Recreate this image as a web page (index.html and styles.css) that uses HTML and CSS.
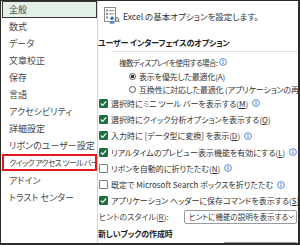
FILE: index.html
```html
<!DOCTYPE html>
<html lang="ja">
<head>
  <meta charset="UTF-8" />
  <title>Excel のオプション</title>
  <link rel="stylesheet" href="styles.css">
</head>
<body>

  <div class="dialog">
    <nav class="side">
      <div class="item selected">全般</div>
      <div class="item">数式</div>
      <div class="item">データ</div>
      <div class="item">文章校正</div>
      <div class="item">保存</div>
      <div class="item">言語</div>
      <div class="item">アクセシビリティ</div>
      <div class="item">詳細設定</div>
      <div class="item">リボンのユーザー設定</div>
      <div class="item marked">クイック アクセス ツール バー</div>
      <div class="item gap">アドイン</div>
      <div class="item">トラスト センター</div>
    </nav>

    <main class="pane">
      <div class="head">
        <svg class="head-icon" width="16" height="17" viewBox="0 0 16 17">
          <rect x="0.5" y="0.5" width="11" height="14" fill="#fff" stroke="#8a8a8a"/>
          <rect x="2" y="2.5" width="2" height="2" fill="#8a8a8a"/>
          <rect x="5" y="3" width="5" height="1" fill="#8a8a8a"/>
          <rect x="2" y="6" width="2" height="2" fill="#8a8a8a"/>
          <rect x="5" y="6.5" width="5" height="1" fill="#8a8a8a"/>
          <rect x="2" y="9.5" width="2" height="2" fill="#8a8a8a"/>
          <circle cx="8" cy="11.3" r="1.8" fill="#2f74c8"/>
          <path d="M5 16.5 Q8 12.3 11 16.5 Z" fill="#2f74c8"/>
          <circle cx="13" cy="12.5" r="1.7" fill="none" stroke="#555" stroke-width="0.9"/>
          <line x1="14.2" y1="13.7" x2="15.6" y2="15.1" stroke="#555" stroke-width="1"/>
        </svg>
        <span>Excel の基本オプションを設定します。</span>
      </div>

      <div class="heading">ユーザー インターフェイスのオプション</div>
      <div class="rule"></div>

      <div class="sub"><span>複数ディスプレイを使用する場合:</span><svg class="info" viewBox="0 0 8 8"><circle cx="4" cy="4" r="3.4" fill="none" stroke="#2b6fd6" stroke-width="0.8"/><circle cx="4" cy="2.4" r="0.55" fill="#2b6fd6"/><rect x="3.55" y="3.4" width="0.9" height="2.6" fill="#2b6fd6"/></svg></div>
      <div class="radio-row"><span class="radio on"></span><span>表示を優先した最適化(A)</span></div>
      <div class="radio-row second"><span class="radio"></span><span>互換性に対応した最適化 (アプリケーションの再起動が必要)</span></div>

      <div class="row"><span class="check on"></span><span>選択時にミニ ツール バーを表示する(<u>M</u>)</span><svg class="info" viewBox="0 0 8 8"><circle cx="4" cy="4" r="3.4" fill="none" stroke="#2b6fd6" stroke-width="0.8"/><circle cx="4" cy="2.4" r="0.55" fill="#2b6fd6"/><rect x="3.55" y="3.4" width="0.9" height="2.6" fill="#2b6fd6"/></svg></div>
      <div class="row"><span class="check on"></span><span>選択時にクイック分析オプションを表示する(<u>Q</u>)</span></div>
      <div class="row"><span class="check on"></span><span>入力時に [データ型に変換] を表示(<u>D</u>)</span><svg class="info" viewBox="0 0 8 8"><circle cx="4" cy="4" r="3.4" fill="none" stroke="#2b6fd6" stroke-width="0.8"/><circle cx="4" cy="2.4" r="0.55" fill="#2b6fd6"/><rect x="3.55" y="3.4" width="0.9" height="2.6" fill="#2b6fd6"/></svg></div>
      <div class="row"><span class="check on"></span><span>リアルタイムのプレビュー表示機能を有効にする(<u>L</u>)</span><svg class="info" viewBox="0 0 8 8"><circle cx="4" cy="4" r="3.4" fill="none" stroke="#2b6fd6" stroke-width="0.8"/><circle cx="4" cy="2.4" r="0.55" fill="#2b6fd6"/><rect x="3.55" y="3.4" width="0.9" height="2.6" fill="#2b6fd6"/></svg></div>
      <div class="row"><span class="check"></span><span>リボンを自動的に折りたたむ(<u>N</u>)</span><svg class="info" viewBox="0 0 8 8"><circle cx="4" cy="4" r="3.4" fill="none" stroke="#2b6fd6" stroke-width="0.8"/><circle cx="4" cy="2.4" r="0.55" fill="#2b6fd6"/><rect x="3.55" y="3.4" width="0.9" height="2.6" fill="#2b6fd6"/></svg></div>
      <div class="row"><span class="check"></span><span>既定で Microsoft Search ボックスを折りたたむ</span><svg class="info" viewBox="0 0 8 8"><circle cx="4" cy="4" r="3.4" fill="none" stroke="#2b6fd6" stroke-width="0.8"/><circle cx="4" cy="2.4" r="0.55" fill="#2b6fd6"/><rect x="3.55" y="3.4" width="0.9" height="2.6" fill="#2b6fd6"/></svg></div>
      <div class="row"><span class="check on"></span><span>アプリケーション ヘッダーに保存コマンドを表示する(<u>S</u>)</span><svg class="info" viewBox="0 0 8 8"><circle cx="4" cy="4" r="3.4" fill="none" stroke="#2b6fd6" stroke-width="0.8"/><circle cx="4" cy="2.4" r="0.55" fill="#2b6fd6"/><rect x="3.55" y="3.4" width="0.9" height="2.6" fill="#2b6fd6"/></svg></div>

      <div class="hint-row">
        <span class="hint-label">ヒントのスタイル(<u>R</u>):</span>
        <div class="select">
          <span>ヒントに機能の説明を表示する</span>
          <svg class="chev" width="6" height="4" viewBox="0 0 6 4"><path d="M0.5 0.5 L3 3 L5.5 0.5" fill="none" stroke="#666" stroke-width="0.9"/></svg>
        </div>
      </div>

      <div class="heading second">新しいブックの作成時</div>
      <div class="hint-row cut">
        <span class="hint-label">次を既定フォントとして使用(<u>N</u>):</span>
        <div class="select narrow"><span>本文のフォント</span></div>
      </div>
    </main>
  </div>

</body>
</html>
```

FILE: styles.css
```css
body {
  margin: 0;
  background-color: #ffffff;
  font-family: "Noto Sans CJK JP", "Noto Sans", sans-serif;
  font-feature-settings: "palt";
  color: #333333;
}

.dialog {
  width: 300px;
  height: 245px;
  box-sizing: border-box;
  border: 1px solid #2b2b2b;
  border-right-width: 2px;
  border-bottom-width: 2px;
  display: flex;
  overflow: hidden;
}

/* left category list */
.side {
  width: 95px;
  flex: none;
  padding-left: 1px;
  border-right: 1px solid #d4d4d4;
  display: flex;
  flex-direction: column;
}

.item {
  height: 17px;
  flex-shrink: 0;
  box-sizing: border-box;
  padding-left: 6px;
  border: 1px solid transparent;
  font-size: 9px;
  line-height: 15px;
  color: #474747;
  white-space: nowrap;
  overflow: hidden;
}

.item.selected {
  background-color: #e3f0e8;
  border-color: #3a3a3a;
}

.item.marked {
  border: 2px solid #e3151d;
  padding-left: 5px;
  line-height: 13px;
  font-size: 8px;
  letter-spacing: -0.7px;
}

.item.gap {
  margin-top: 1px;
}

/* right options pane */
.pane {
  flex: 1;
  min-width: 0;
  display: flex;
  flex-direction: column;
  font-size: 8px;
  white-space: nowrap;
}

.pane > * {
  flex-shrink: 0;
}

.head {
  height: 29px;
  display: flex;
  align-items: center;
  gap: 3px;
  padding-left: 6px;
  font-size: 8.5px;
  color: #333333;
}

.heading {
  height: 14px;
  margin-top: 6px;
  line-height: 14px;
  font-size: 8px;
  letter-spacing: -0.15px;
  font-weight: bold;
  color: #222222;
}

.heading.second {
  margin-top: 3px;
}

.rule {
  height: 1px;
  margin: 1px 0 0 13px;
  background-color: #e2e2e2;
}

.sub {
  height: 14px;
  margin-top: 3px;
  padding-left: 21px;
  display: flex;
  align-items: center;
  font-size: 7.5px;
  letter-spacing: -0.5px;
}

.radio-row {
  height: 14px;
  padding-left: 31px;
  display: flex;
  align-items: center;
  gap: 3px;
  letter-spacing: -0.15px;
}

.radio-row.second {
  height: 12px;
}

.radio {
  width: 7px;
  height: 7px;
  border: 1px solid #555555;
  border-radius: 50%;
  box-sizing: border-box;
  flex: none;
}

.radio.on {
  background: radial-gradient(circle, #333333 1.6px, transparent 2px);
}

.row {
  height: 16.3px;
  padding-left: 1px;
  display: flex;
  align-items: center;
  gap: 3px;
}

.check {
  width: 9px;
  height: 9px;
  box-sizing: border-box;
  border: 1px solid #7a7a7a;
  border-radius: 1px;
  flex: none;
  background-color: #ffffff;
}

.check.on {
  border-color: #1d6e40;
  background: #1d6e40 url("data:image/svg+xml,%3Csvg xmlns='http://www.w3.org/2000/svg' viewBox='0 0 9 9'%3E%3Cpath d='M1.8 4.6 L3.6 6.3 L7.2 2.4' fill='none' stroke='white' stroke-width='1.2'/%3E%3C/svg%3E") center / 9px 9px no-repeat;
}

.info {
  width: 8px;
  height: 8px;
  margin-left: 1px;
  flex: none;
}

u {
  text-underline-offset: 1px;
}

.hint-row {
  height: 15px;
  padding-left: 1px;
  display: flex;
  align-items: center;
  gap: 5px;
}

.hint-row.cut {
  padding-left: 21px;
}

.hint-label {
  min-width: 80px;
  color: #444444;
}

.select {
  width: 113px;
  height: 14px;
  box-sizing: border-box;
  border: 1px solid #9a9a9a;
  border-radius: 2px;
  padding: 0 4px;
  display: flex;
  align-items: center;
  justify-content: space-between;
  font-size: 7.5px;
  color: #333333;
}

.select.narrow {
  width: 80px;
}

.chev {
  flex: none;
}
```
